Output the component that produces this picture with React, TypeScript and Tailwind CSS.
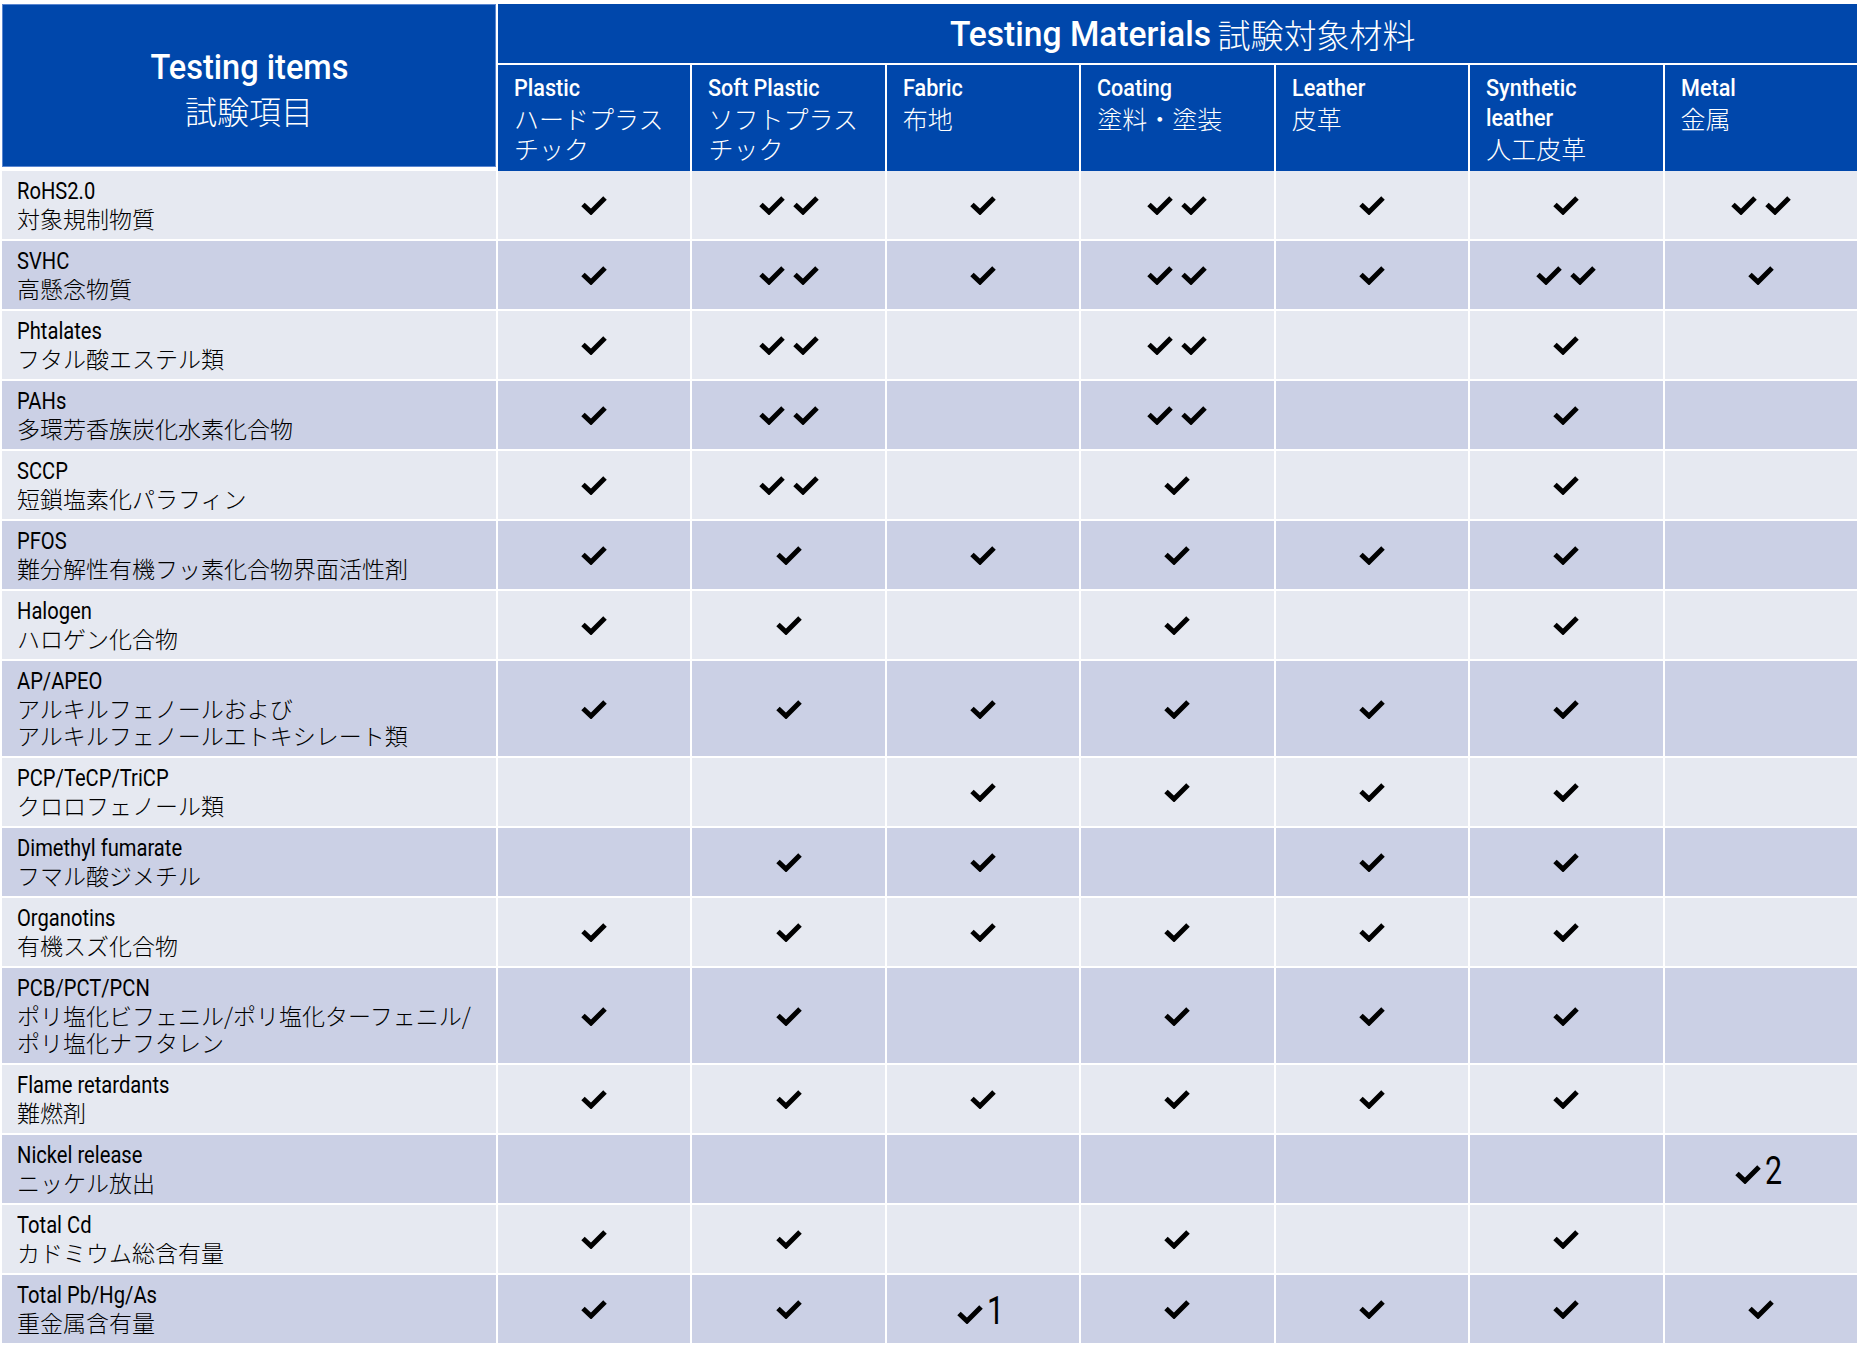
import React from "react";

type V = 0 | 1 | 2 | "n1" | "n2";

const LAT = "font-['Roboto','Noto_Sans_CJK_JP',sans-serif]";
const JP = "font-['Noto_Sans_CJK_JP',sans-serif]";

const materials: { en: string[]; ja: string[] }[] = [
  { en: ["Plastic"], ja: ["ハードプラス", "チック"] },
  { en: ["Soft Plastic"], ja: ["ソフトプラス", "チック"] },
  { en: ["Fabric"], ja: ["布地"] },
  { en: ["Coating"], ja: ["塗料・塗装"] },
  { en: ["Leather"], ja: ["皮革"] },
  { en: ["Synthetic", "leather"], ja: ["人工皮革"] },
  { en: ["Metal"], ja: ["金属"] },
];

const rows: { en: string; ja: string[]; v: V[] }[] = [
  { en: "RoHS2.0", ja: ["対象規制物質"], v: [1, 2, 1, 2, 1, 1, 2] },
  { en: "SVHC", ja: ["高懸念物質"], v: [1, 2, 1, 2, 1, 2, 1] },
  { en: "Phtalates", ja: ["フタル酸エステル類"], v: [1, 2, 0, 2, 0, 1, 0] },
  { en: "PAHs", ja: ["多環芳香族炭化水素化合物"], v: [1, 2, 0, 2, 0, 1, 0] },
  { en: "SCCP", ja: ["短鎖塩素化パラフィン"], v: [1, 2, 0, 1, 0, 1, 0] },
  { en: "PFOS", ja: ["難分解性有機フッ素化合物界面活性剤"], v: [1, 1, 1, 1, 1, 1, 0] },
  { en: "Halogen", ja: ["ハロゲン化合物"], v: [1, 1, 0, 1, 0, 1, 0] },
  {
    en: "AP/APEO",
    ja: ["アルキルフェノールおよび", "アルキルフェノールエトキシレート類"],
    v: [1, 1, 1, 1, 1, 1, 0],
  },
  { en: "PCP/TeCP/TriCP", ja: ["クロロフェノール類"], v: [0, 0, 1, 1, 1, 1, 0] },
  { en: "Dimethyl fumarate", ja: ["フマル酸ジメチル"], v: [0, 1, 1, 0, 1, 1, 0] },
  { en: "Organotins", ja: ["有機スズ化合物"], v: [1, 1, 1, 1, 1, 1, 0] },
  {
    en: "PCB/PCT/PCN",
    ja: ["ポリ塩化ビフェニル/ポリ塩化ターフェニル/", "ポリ塩化ナフタレン"],
    v: [1, 1, 0, 1, 1, 1, 0],
  },
  { en: "Flame retardants", ja: ["難燃剤"], v: [1, 1, 1, 1, 1, 1, 0] },
  { en: "Nickel release", ja: ["ニッケル放出"], v: [0, 0, 0, 0, 0, 0, "n2"] },
  { en: "Total Cd", ja: ["カドミウム総含有量"], v: [1, 1, 0, 1, 0, 1, 0] },
  { en: "Total Pb/Hg/As", ja: ["重金属含有量"], v: [1, 1, "n1", 1, 1, 1, 1] },
];

function Check() {
  return (
    <svg width="26" height="20" viewBox="0 0 26 20" className="block">
      <polyline
        points="2,9.5 10,17 24,3"
        fill="none"
        stroke="#000"
        strokeWidth="5"
        strokeLinejoin="miter"
        strokeLinecap="butt"
      />
    </svg>
  );
}

function Mark({ v }: { v: V }) {
  if (v === 0) return null;
  if (v === 1) return <Check />;
  if (v === 2)
    return (
      <div className="flex items-center gap-[8px]">
        <Check />
        <Check />
      </div>
    );
  return (
    <div className="flex items-center">
      <div className="mt-[9px]">
        <Check />
      </div>
      <span className={`${LAT} inline-block origin-left scale-x-[0.8] text-[38px] leading-none text-black mt-[3px] ml-[4px]`}>
        {v === "n1" ? "1" : "2"}
      </span>
    </div>
  );
}

export default function App() {
  return (
    <div className="w-[1860px] h-[1356px] bg-white pt-[4px] pl-[2px]">
      <div className="w-[1855px]">
        {/* Header */}
        <div className="flex h-[167px] items-start">
          <div className="w-[494px] h-[163px] bg-[#0047ab] border border-[#5a86d0] flex flex-col items-center justify-center pt-[6px] text-white">
            <div className={`${LAT} text-[35px] font-medium leading-[42px] scale-x-[0.93]`}>Testing items</div>
            <div className={`${JP} text-[32px] font-light leading-[42px]`}>試験項目</div>
          </div>
          <div className="ml-[2px] flex-1 h-[167px] flex flex-col gap-[2px]">
            <div className="h-[59px] bg-[#0047ab] flex items-center justify-center pt-[3px] text-white">
              <span className={`${LAT} inline-block text-[35px] font-medium scale-x-[0.96] origin-right`}>
                Testing Materials
              </span>
              <span className={`${JP} text-[33px] font-light ml-[6px]`}>試験対象材料</span>
            </div>
            <div className="flex-1 grid grid-cols-7 gap-x-[2px]">
              {materials.map((m, i) => (
                <div key={i} className="bg-[#0047ab] pl-[16px] pt-[8px] text-white">
                  {m.en.map((t, j) => (
                    <div key={j} className={`${LAT} text-[24px] font-medium leading-[30px]`}>
                      <span className="inline-block origin-left scale-x-[0.9] whitespace-nowrap">{t}</span>
                    </div>
                  ))}
                  {m.ja.map((t, j) => (
                    <div key={j} className={`${JP} text-[25px] font-light leading-[30px]`}>
                      {t}
                    </div>
                  ))}
                </div>
              ))}
            </div>
          </div>
        </div>

        {/* Body */}
        <div className="flex flex-col gap-[2px]">
          {rows.map((r, i) => {
            const bg = i % 2 === 0 ? "bg-[#e6e9f1]" : "bg-[#cbd0e5]";
            return (
              <div key={i} className="grid grid-cols-[494px_repeat(7,minmax(0,1fr))] gap-x-[2px]">
                <div className={`${bg} pl-[15px] py-[7px] flex flex-col justify-center text-black`}>
                  <div className={`${LAT} text-[24px] leading-[27px]`}>
                    <span className="inline-block origin-left scale-x-[0.84] whitespace-nowrap">{r.en}</span>
                  </div>
                  {r.ja.map((t, j) => (
                    <div key={j} className={`${JP} text-[23px] font-light leading-[27px] whitespace-nowrap`}>
                      {t}
                    </div>
                  ))}
                </div>
                {r.v.map((v, j) => (
                  <div key={j} className={`${bg} flex items-center justify-center`}>
                    <Mark v={v} />
                  </div>
                ))}
              </div>
            );
          })}
        </div>
      </div>
    </div>
  );
}
